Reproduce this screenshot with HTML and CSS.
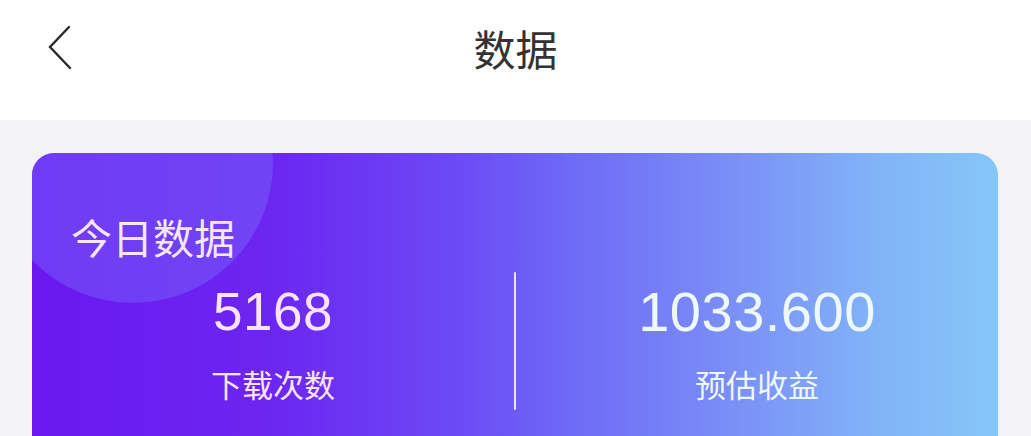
FILE: index.html
```html
<!DOCTYPE html>
<html lang="zh-CN">
<head>
<meta charset="utf-8">
<title>数据</title>
<link rel="stylesheet" href="styles.css">
</head>
<body>
<header class="nav">
  <div class="nav-row">
    <a class="back" aria-label="返回">
      <svg width="30" height="50" viewBox="0 0 30 50"><polyline points="23,4 4,24 24,45" fill="none" stroke="#2a2a2a" stroke-width="2.4" stroke-linecap="round" stroke-linejoin="miter"/></svg>
    </a>
    <h1 class="title">数据</h1>
    <span class="spacer"></span>
  </div>
</header>
<main class="page">
  <section class="card">
    <h2 class="card-title">今日数据</h2>
    <div class="stats">
      <div class="stat stat-left">
        <div class="stat-num">5168</div>
        <div class="stat-label">下载次数</div>
      </div>
      <div class="divider"></div>
      <div class="stat stat-right">
        <div class="stat-num">1033.600</div>
        <div class="stat-label">预估收益</div>
      </div>
    </div>
  </section>
</main>
</body>
</html>
```

FILE: styles.css
```css
html, body {
  margin: 0;
  padding: 0;
  overflow: hidden;
  background: #f3f3f5;
}
body {
  font-family: "Noto Sans CJK SC", "Noto Sans", sans-serif;
}
.nav {
  background: #ffffff;
  padding-bottom: 24px;
}
.nav-row {
  height: 96px;
  display: grid;
  grid-template-columns: 1fr auto 1fr;
  align-items: center;
}
.back {
  display: flex;
  align-items: center;
  padding-left: 46px;
}
.back svg {
  display: block;
}
.title {
  margin: 0;
  font-size: 42px;
  font-weight: 400;
  color: #333333;
  line-height: 1.2;
}
.page {
  padding: 33px 33px 0 32px;
}
.card {
  position: relative;
  overflow: hidden;
  height: 330px;
  border-radius: 22px;
  background: linear-gradient(90deg, #6a18ef 0%, #6c26f1 25%, #6c4cf5 45%, #6e68f6 55%, #7a8ef7 72%, #82b4f8 88%, #86c6f8 100%);
}
.card::before {
  content: "";
  position: absolute;
  left: -39px;
  top: -130px;
  width: 280px;
  height: 280px;
  border-radius: 50%;
  background: rgba(125, 130, 255, 0.33);
}
.card-title {
  position: relative;
  margin: 0;
  padding: 58px 0 0 39px;
  font-size: 41px;
  font-weight: 400;
  line-height: 50px;
  color: #f6e6fa;
}
.stats {
  position: relative;
  display: flex;
  margin-top: 11px;
}
.stat {
  flex: 1;
  text-align: center;
  padding: 9px 0 7px;
}
.divider {
  width: 2px;
  background: #e9e2ff;
  border-radius: 1px;
}
.stat-num {
  font-family: "Liberation Sans", Arial, sans-serif;
  font-size: 53px;
  line-height: 62px;
  font-weight: 400;
  letter-spacing: 0.5px;
}
.stat-right .stat-num {
  font-size: 56px;
}
.stat-label {
  margin-top: 22px;
  font-size: 31px;
  line-height: 38px;
}
.stat-left {
  color: #f9e4fb;
}
.stat-right {
  color: #eef8ff;
}
```
